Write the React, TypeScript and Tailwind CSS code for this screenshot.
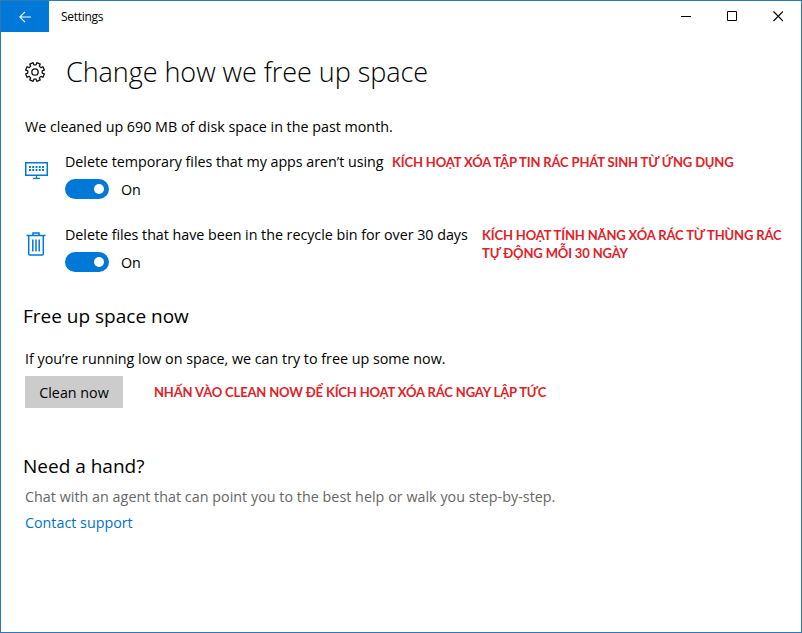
import type { ReactNode } from 'react'

// eight rounded teeth, with a notch at each compass point
const gearPath = Array.from({ length: 8 }, (_, i) => {
  const base = i * 45 + 22.5
  return [
    [-14, 7.3],
    [-11, 9.5],
    [11, 9.5],
    [14, 7.3],
  ]
    .map(([offset, radius]) => {
      const a = ((base + offset) * Math.PI) / 180
      return `${(11 + radius * Math.cos(a)).toFixed(2)} ${(11 + radius * Math.sin(a)).toFixed(2)}`
    })
    .join('L')
}).join('L')

function GearIcon() {
  return (
    <svg className="h-[22px] w-[22px]" viewBox="0 0 22 22" fill="none" stroke="#111" strokeWidth="1.3" strokeLinejoin="round">
      <path d={`M${gearPath}Z`} />
      <circle cx="11" cy="11" r="3.2" />
    </svg>
  )
}

function MonitorIcon() {
  return (
    <svg className="h-[18px] w-[23px]" viewBox="0 0 23 18" fill="none" stroke="#0078d7">
      <rect x="0.75" y="0.75" width="21.5" height="12.5" strokeWidth="1.5" />
      <path d="M4 5h15M4 8h15" strokeWidth="1.8" strokeDasharray="1.9 1.37" />
      <path d="M11.5 13v3.5M8 16.4h7" strokeWidth="1.3" />
    </svg>
  )
}

function TrashIcon() {
  return (
    <svg className="h-6 w-5" viewBox="0 0 20 24" fill="none" stroke="#0078d7" strokeWidth="1.5">
      <path d="M0.5 3.5h19M7 3.5V0.9h6v2.6M2.7 3.5v18.2a1.4 1.4 0 0 0 1.4 1.4h11.8a1.4 1.4 0 0 0 1.4-1.4V3.5" />
      <path d="M6.8 7.5v12M10 7.5v12M13.2 7.5v12" />
    </svg>
  )
}

function Toggle() {
  return (
    <div className="flex items-center gap-3">
      <button className="flex h-5 w-11 items-center justify-end rounded-full bg-[#0078d7] pr-[5px]" aria-label="Toggle">
        <span className="h-2.5 w-2.5 rounded-full bg-white" />
      </button>
      <span className="-mb-0.5 leading-5">On</span>
    </div>
  )
}

function Note({ children, className }: { children: ReactNode; className?: string }) {
  return (
    <p className={`font-[Lato,'Open_Sans',sans-serif] text-[13px] leading-[18px] font-bold tracking-[-0.15px] text-[#df2229] ${className ?? ''}`}>
      {children}
    </p>
  )
}

function TitleBar() {
  return (
    <header className="flex h-[31px] items-center">
      <button className="flex h-[31px] w-12 items-center justify-center bg-[#0078d7]" aria-label="Back">
        <svg className="h-3 w-3" viewBox="0 0 12 12" fill="none" stroke="white" strokeWidth="1.1">
          <path d="M12 6H0.8M6 0.8 0.8 6 6 11.2" />
        </svg>
      </button>
      <span className="ml-3 text-[12px] tracking-[-0.3px]">Settings</span>
      <svg className="mr-[18px] ml-auto h-[11px] w-[102px]" viewBox="0 0 102 11" fill="none" stroke="black">
        <path d="M0 5.5h10M46.5 0.5h9v9h-9z" />
        <path d="M92.5 0.5l9.5 9.5M102 0.5l-9.5 9.5" strokeWidth="1.2" />
      </svg>
    </header>
  )
}

export default function App() {
  return (
    <div className="h-[633px] w-[802px] overflow-hidden border border-[#2a7ab8] bg-white font-['Open_Sans','Noto_Sans',sans-serif] text-black">
      <TitleBar />
      <main className="pl-6 text-[14.3px] leading-5 whitespace-nowrap">
        <div className="mt-5 flex h-10 items-center gap-5">
          <div className="-ml-px">
            <GearIcon />
          </div>
          <h1 className="text-[27px] leading-10 font-light tracking-[-0.05px]">Change how we free up space</h1>
        </div>

        <p className="mt-[25px]">We cleaned up 690 MB of disk space in the past month.</p>

        <section className="mt-[15px] flex">
          <div className="w-10 pt-2.5">
            <MonitorIcon />
          </div>
          <div>
            <div className="flex">
              <p className="w-[327px] tracking-[-0.03px]">Delete temporary files that my apps aren’t using</p>
              <Note className="pt-px">KÍCH HOẠT XÓA TẬP TIN RÁC PHÁT SINH TỪ ỨNG DỤNG</Note>
            </div>
            <div className="mt-[7px]">
              <Toggle />
            </div>
          </div>
        </section>

        <section className="mt-[26px] flex h-[47px]">
          <div className="w-10 pt-[7px] pl-px">
            <TrashIcon />
          </div>
          <div className="w-[417px]">
            <p className="tracking-[-0.03px]">Delete files that have been in the recycle bin for over 30 days</p>
            <div className="mt-[7px]">
              <Toggle />
            </div>
          </div>
          <Note className="pt-px">
            KÍCH HOẠT TÍNH NĂNG XÓA RÁC TỪ THÙNG RÁC
            <br />
            TỰ ĐỘNG MỖI 30 NGÀY
          </Note>
        </section>

        <h2 className="mt-[30px] -ml-0.5 text-[19px] leading-7">Free up space now</h2>
        <p className="mt-[19px]">If you’re running low on space, we can try to free up some now.</p>
        <div className="mt-[7px] flex items-center gap-[31px]">
          <button className="h-8 w-[98px] bg-[#ccc] pt-0.5">Clean now</button>
          <Note>NHẤN VÀO CLEAN NOW ĐỂ KÍCH HOẠT XÓA RÁC NGAY LẬP TỨC</Note>
        </div>

        <h2 className="mt-11 -ml-0.5 text-[19px] leading-7">Need a hand?</h2>
        <p className="mt-[7px] tracking-[0.03px] text-[#666]">
          Chat with an agent that can point you to the best help or walk you step-by-step.
        </p>
        <a className="mt-1.5 block text-[#0072c9]">Contact support</a>
      </main>
    </div>
  )
}
